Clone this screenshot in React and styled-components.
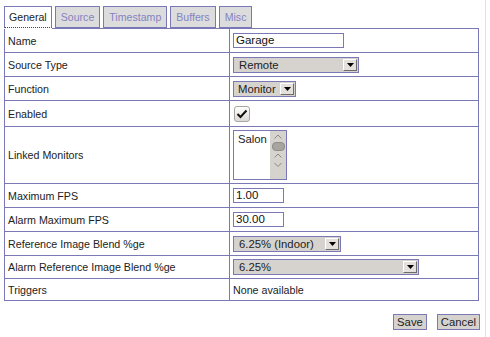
import React from "react";
import styled, { createGlobalStyle } from "styled-components";

const Global = createGlobalStyle`
  html, body { margin: 0; padding: 0; background: #fff; }
  body { font-family: "Liberation Sans", Arial, sans-serif; font-size: 10.7px; color: #222; }
`;

const purple = "#7b78b8";

const Page = styled.div`
  width: 486px;
  height: 337px;
  box-sizing: border-box;
  padding: 6px 0 0 4px;
  border-right: 1px solid #e2e2e2;
`;

const TabBar = styled.div`
  display: flex;
  align-items: flex-end;
  gap: 3px;
  height: 22px;
`;

const Tab = styled.div`
  box-sizing: border-box;
  height: 22px;
  padding: 0 ${(p) => (p.$active ? 4 : 5)}px;
  display: flex;
  align-items: center;
  font-size: 10.6px;
  border: 1px solid ${purple};
  background: ${(p) => (p.$active ? "#fff" : "#dcdcdc")};
  color: ${(p) => (p.$active ? "#222" : "#8583c2")};
  position: relative;
  z-index: 1;
  ${(p) =>
    p.$active &&
    `border-bottom: 1px dotted #444; box-shadow: 0 1px 0 #fff;`}
`;

const Grid = styled.div`
  display: grid;
  grid-template-columns: 225px 249px;
  grid-template-rows: 24px 24px 24px 26px 57px 24px 24px 24px 23px 22px;
  width: 475px;
  border-left: 1px solid ${purple};
  border-top: 1px solid ${purple};
  box-sizing: border-box;
`;

const Cell = styled.div`
  box-sizing: border-box;
  border-right: 1px solid ${purple};
  border-bottom: 1px solid ${purple};
  display: flex;
  align-items: center;
  padding-left: 3px;
  color: #222;
`;

const TextInput = styled.div`
  box-sizing: border-box;
  width: ${(p) => p.$w}px;
  height: 15px;
  border: 1px solid ${purple};
  background: #fff;
  padding-left: 2px;
  line-height: 13px;
  font-size: 11.5px;
  color: #111;
`;

const SelectBox = styled.div`
  box-sizing: border-box;
  width: ${(p) => p.$w}px;
  height: 16px;
  border: 1px solid ${purple};
  background: #d6d3ce;
  display: flex;
  align-items: center;
  justify-content: space-between;
  padding: 0 1px 0 ${(p) => (p.$pad ? p.$pad : 5)}px;
  color: #222;
  font-size: 11.3px;
`;

const SelectButton = styled.div`
  box-sizing: border-box;
  width: 14px;
  height: 12px;
  background: #e4e1dc;
  border-top: 1px solid #fff;
  border-left: 1px solid #fff;
  border-right: 1px solid #6e6c68;
  border-bottom: 1px solid #6e6c68;
  display: flex;
  align-items: center;
  justify-content: center;
`;

const Arrow = () => (
  <svg width="7" height="4" viewBox="0 0 7 4">
    <path d="M0 0 H7 L3.5 4 Z" fill="#000" />
  </svg>
);

const Select = ({ w, children, pad }) => (
  <SelectBox $w={w} $pad={pad}>
    <span>{children}</span>
    <SelectButton>
      <Arrow />
    </SelectButton>
  </SelectBox>
);

const Check = styled.div`
  box-sizing: border-box;
  width: 16px;
  height: 16px;
  margin-left: 1px;
  border: 1px solid #a9a6a2;
  border-radius: 3px;
  background: linear-gradient(#ffffff, #dcdad6);
  display: flex;
  align-items: center;
  justify-content: center;
`;

const ListBox = styled.div`
  box-sizing: border-box;
  width: 54px;
  height: 50px;
  border: 1px solid ${purple};
  background: #fff;
  display: flex;
`;

const ListItems = styled.div`
  flex: 1;
  padding: 2px 0 0 4px;
  font-size: 11.3px;
  color: #222;
`;

const ScrollBar = styled.div`
  width: 16px;
  background: #d6d3ce;
  display: flex;
  flex-direction: column;
  align-items: center;
  padding-top: 2px;
  gap: 1px;
`;

const Thumb = styled.div`
  width: 13px;
  height: 9px;
  border-radius: 4px;
  background: #a8a5a1;
  border: 1px solid #8f8c88;
  box-sizing: border-box;
`;

const Chevron = ({ down }) => (
  <svg width="10" height="8" viewBox="0 0 10 8">
    <path
      d={down ? "M1.5 2 L5 5.5 L8.5 2" : "M1.5 5.5 L5 2 L8.5 5.5"}
      stroke="#8c8984"
      strokeWidth="1"
      fill="none"
    />
  </svg>
);

const Actions = styled.div`
  width: 476px;
  display: flex;
  justify-content: flex-end;
  gap: 10px;
  margin-top: 13px;
`;

const Button = styled.div`
  box-sizing: border-box;
  height: 16px;
  padding: 0 3px;
  border: 1px solid ${purple};
  background: #d6d3ce;
  color: #222;
  font-size: 11.3px;
  display: flex;
  align-items: center;
`;

const rows = [
  ["Name", <TextInput $w={111}>Garage</TextInput>],
  ["Source Type", <Select w={126}>Remote</Select>],
  ["Function", <Select w={63} pad={4}>Monitor</Select>],
  [
    "Enabled",
    <Check>
      <svg width="12" height="10" viewBox="0 0 12 10">
        <path d="M1.5 5 L4.5 8 L10.5 1.5" stroke="#111" strokeWidth="2" fill="none" />
      </svg>
    </Check>,
  ],
  [
    "Linked Monitors",
    <ListBox>
      <ListItems>Salon</ListItems>
      <ScrollBar>
        <Chevron />
        <Thumb />
        <Chevron />
        <Chevron down />
      </ScrollBar>
    </ListBox>,
  ],
  ["Maximum FPS", <TextInput $w={51}>1.00</TextInput>],
  ["Alarm Maximum FPS", <TextInput $w={51}>30.00</TextInput>],
  ["Reference Image Blend %ge", <Select w={108}>6.25% (Indoor)</Select>],
  ["Alarm Reference Image Blend %ge", <Select w={186}>6.25%</Select>],
  ["Triggers", <span>None available</span>],
];

export default function App() {
  return (
    <>
      <Global />
      <Page>
        <TabBar>
          <Tab $active>General</Tab>
          <Tab>Source</Tab>
          <Tab>Timestamp</Tab>
          <Tab>Buffers</Tab>
          <Tab>Misc</Tab>
        </TabBar>
        <Grid>
          {rows.map(([label, ctrl]) => (
            <React.Fragment key={label}>
              <Cell>{label}</Cell>
              <Cell>{ctrl}</Cell>
            </React.Fragment>
          ))}
        </Grid>
        <Actions>
          <Button>Save</Button>
          <Button>Cancel</Button>
        </Actions>
      </Page>
    </>
  );
}
